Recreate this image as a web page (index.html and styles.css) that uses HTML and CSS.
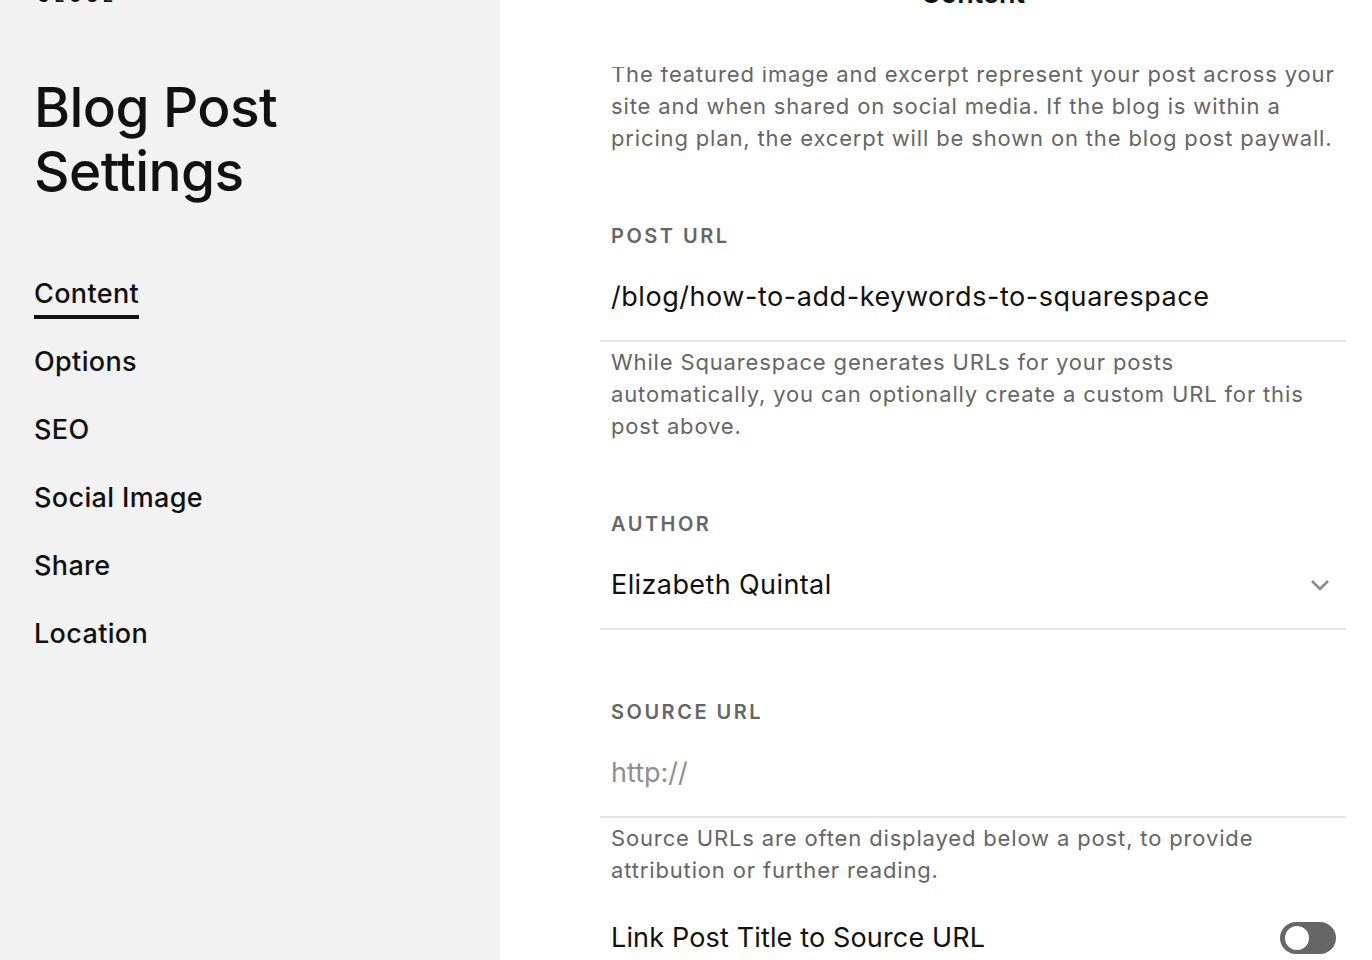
FILE: index.html
```html
<!DOCTYPE html>
<html lang="en">
<head>
<meta charset="utf-8">
<title>Blog Post Settings</title>
<link rel="stylesheet" href="styles.css">
</head>
<body>
<div class="app">
  <aside class="sidebar">
    <div class="close">Close</div>
    <h1 class="title">Blog Post<br>Settings</h1>
    <nav class="nav">
      <a class="nav-item active">Content</a>
      <a class="nav-item">Options</a>
      <a class="nav-item">SEO</a>
      <a class="nav-item">Social Image</a>
      <a class="nav-item">Share</a>
      <a class="nav-item">Location</a>
    </nav>
  </aside>
  <main class="panel">
    <header class="panel-header">
      <div class="panel-title">Content</div>
    </header>
    <div class="scroll">
      <div class="column">
        <p class="desc">The featured image and excerpt represent your post across your<br>site and when shared on social media. If the blog is within a<br>pricing plan, the excerpt will be shown on the blog post paywall.</p>

        <section class="section">
          <div class="label">Post URL</div>
          <div class="field"><span class="value url">/blog/how-to-add-keywords-to-squarespace</span></div>
          <p class="help">While Squarespace generates URLs for your posts<br>automatically, you can optionally create a custom URL for this<br>post above.</p>
        </section>

        <section class="section">
          <div class="label">Author</div>
          <div class="field select"><span class="value">Elizabeth Quintal</span>
            <svg class="chevron" width="20" height="14" viewBox="0 0 20 14" aria-hidden="true"><polyline points="2,3 10,11 18,3" fill="none" stroke="#8a8a8a" stroke-width="2.6"/></svg>
          </div>
        </section>

        <section class="section">
          <div class="label">Source URL</div>
          <div class="field"><span class="value placeholder">http://</span></div>
          <p class="help">Source URLs are often displayed below a post, to provide<br>attribution or further reading.</p>
        </section>

        <div class="toggle-row">
          <span class="toggle-label">Link Post Title to Source URL</span>
          <span class="toggle"><span class="knob"></span></span>
        </div>
      </div>
    </div>
  </main>
</div>
</body>
</html>
```

FILE: styles.css
```css
* { box-sizing: border-box; }
html, body { margin: 0; padding: 0; }
body {
  font-family: Inter, "Liberation Sans", Arial, sans-serif;
  color: #111;
  background: #fff;
}
.app {
  display: flex;
  width: 1372px;
  height: 960px;
  overflow: hidden;
}
.sidebar {
  width: 500px;
  flex: none;
  background: #f2f2f2;
  padding-left: 35px;
}
.close {
  margin-top: -14px;
  font-size: 17px;
  line-height: 20px;
  font-weight: 600;
  letter-spacing: 5px;
  text-transform: uppercase;
  color: #111;
  padding-left: 2px;
}
.title {
  margin: 69px 0 0 -1px;
  font-size: 55px;
  line-height: 64px;
  font-weight: 500;
  letter-spacing: -0.6px;
  color: #111;
}
.nav {
  margin-top: 73px;
  display: flex;
  flex-direction: column;
  align-items: flex-start;
  gap: 25px;
}
.nav-item {
  font-size: 27px;
  line-height: 36px;
  font-weight: 500;
  letter-spacing: 0.35px;
  color: #111;
  padding-bottom: 3px;
  border-bottom: 4px solid transparent;
  margin-left: -1px;
}
.nav-item.active { border-bottom-color: #111; }

.panel {
  flex: 1;
  display: flex;
  flex-direction: column;
  background: #fff;
}
.panel-header {
  height: 67px;
  flex: none;
  padding-left: 100px;
  width: 846px;
}
.panel-title {
  margin-top: -22px;
  text-align: center;
  font-size: 27px;
  line-height: 32px;
  font-weight: 600;
}
.scroll {
  flex: 1;
  overflow: hidden;
}
.column {
  margin-top: -9px;
  margin-left: 100px;
  width: 746px;
}
.desc, .help {
  margin: 0;
  padding: 0 0 0 11px;
  font-size: 22px;
  line-height: 32px;
  letter-spacing: 0.85px;
  color: #666;
}
.section { margin-top: 70px; }
.label {
  padding: 0 11px;
  font-size: 20px;
  line-height: 24px;
  font-weight: 600;
  letter-spacing: 2.5px;
  text-transform: uppercase;
  color: #666;
}
.field {
  display: flex;
  align-items: center;
  justify-content: space-between;
  padding: 33px 16px 27px 11px;
  border-bottom: 2px solid #e6e6e6;
}
.value {
  font-size: 27px;
  line-height: 32px;
  letter-spacing: 0.4px;
  color: #111;
}
.value.url { letter-spacing: 0.55px; }
.value.placeholder { color: #8f8f8f; letter-spacing: 0; }
.chevron { display: block; }
.help { margin-top: 4px; }
.toggle-row {
  margin-top: 36px;
  display: flex;
  align-items: center;
  justify-content: space-between;
  padding: 0 10px 0 11px;
}
.toggle-label {
  font-size: 27px;
  line-height: 32px;
  letter-spacing: 0.15px;
  color: #111;
}
.toggle {
  width: 56px;
  height: 32px;
  border-radius: 16px;
  background: #666;
  display: flex;
  align-items: center;
  padding-left: 5px;
}
.knob {
  width: 24px;
  height: 24px;
  border-radius: 50%;
  background: #fff;
}
```
